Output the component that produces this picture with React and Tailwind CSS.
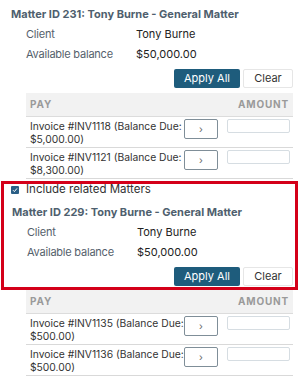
import React from "react";

function Details({ title }) {
  return (
    <>
      <div className="h-[20px] flex items-center pl-[11px] text-[11px] font-bold text-[#4f5f6e] whitespace-nowrap">{title}</div>
      <div className="h-[20px] flex items-center text-[11px]">
        <div className="pl-[26px] w-[136px] text-[#55616c] tracking-[-0.02em]">Client</div>
        <div className="text-[#222]">Tony Burne</div>
      </div>
      <div className="h-[20px] flex items-center text-[11px]">
        <div className="pl-[26px] w-[136px] text-[#55616c] tracking-[-0.02em]">Available balance</div>
        <div className="text-[#222]">$50,000.00</div>
      </div>
    </>
  );
}

function Buttons() {
  return (
    <div className="mt-[5px] flex justify-end gap-[3px] h-[19px]">
      <button className="w-[66px] h-[19px] rounded-[2px] bg-[#1e5c7c] text-white text-[11px] flex items-center justify-center">Apply All</button>
      <button className="w-[50px] h-[19px] rounded-[2px] bg-white border border-[#e6e6e6] text-[#333] text-[11px] flex items-center justify-center">Clear</button>
    </div>
  );
}

function Row({ inv, amt }) {
  return (
    <div className="h-[31px] flex border-b border-[#d9d9d9]">
      <div className="w-[158px] pl-[4px] pt-[3px] text-[10.3px] leading-[13px] text-[#333] whitespace-nowrap">
        Invoice #{inv} (Balance Due:
        <br />
        {amt})
      </div>
      <div className="pt-[2px]">
        <div className="w-[34px] h-[20px] border border-[#7f8e98] rounded-[2px] flex items-center justify-center text-[10px] text-[#666] leading-none">›</div>
      </div>
      <div className="pt-[2px] ml-[9px]">
        <div className="w-[63px] h-[14px] border border-[#d6dde2] rounded-[2px] bg-white"></div>
      </div>
    </div>
  );
}

function Table({ rows }) {
  return (
    <div className="ml-[26px] w-[267px]">
      <div className="h-[24px] bg-[#f2f2f2] border-b border-[#dcdcdc] flex items-center justify-between px-[4px] text-[10px] font-bold tracking-[0.08em] text-[#9a9a9a]">
        <span>PAY</span>
        <span>AMOUNT</span>
      </div>
      {rows.map((r) => (
        <Row key={r[0]} inv={r[0]} amt={r[1]} />
      ))}
    </div>
  );
}

export default function App() {
  return (
    <div className="w-[306px] h-[389px] bg-white overflow-hidden font-['Inter',sans-serif]">
      <div className="w-[298px]">
        <div className="pt-[4px]">
          <Details title="Matter ID 231: Tony Burne - General Matter" />
          <div className="pr-[5px]">
            <Buttons />
          </div>
          <div className="mt-[5px]">
            <Table rows={[["INV1118", "$5,000.00"], ["INV1121", "$8,300.00"]]} />
          </div>
        </div>
        <div className="mt-[2px] ml-[1px] w-[297px] bg-[#d40019] p-[3px]">
          <div className="bg-white">
            <div className="h-[12px] flex items-center pl-[7px] gap-[7px] text-[11.5px] leading-none text-[#333]">
              <span className="w-[8px] h-[8px] rounded-[1px] bg-[#2b5f86] flex items-center justify-center">
                <svg width="6" height="6" viewBox="0 0 6 6"><path d="M1 3.2 L2.4 4.6 L5 1.4" stroke="white" strokeWidth="1" fill="none" /></svg>
              </span>
              <span>Include related Matters</span>
            </div>
            <div className="mt-[6px] -ml-[3px]">
              <Details title="Matter ID 229: Tony Burne - General Matter" />
            </div>
            <div className="pr-[2px] pb-[1px]">
              <Buttons />
            </div>
          </div>
        </div>
        <div>
          <Table rows={[["INV1135", "$500.00"], ["INV1136", "$500.00"]]} />
        </div>
      </div>
    </div>
  );
}
